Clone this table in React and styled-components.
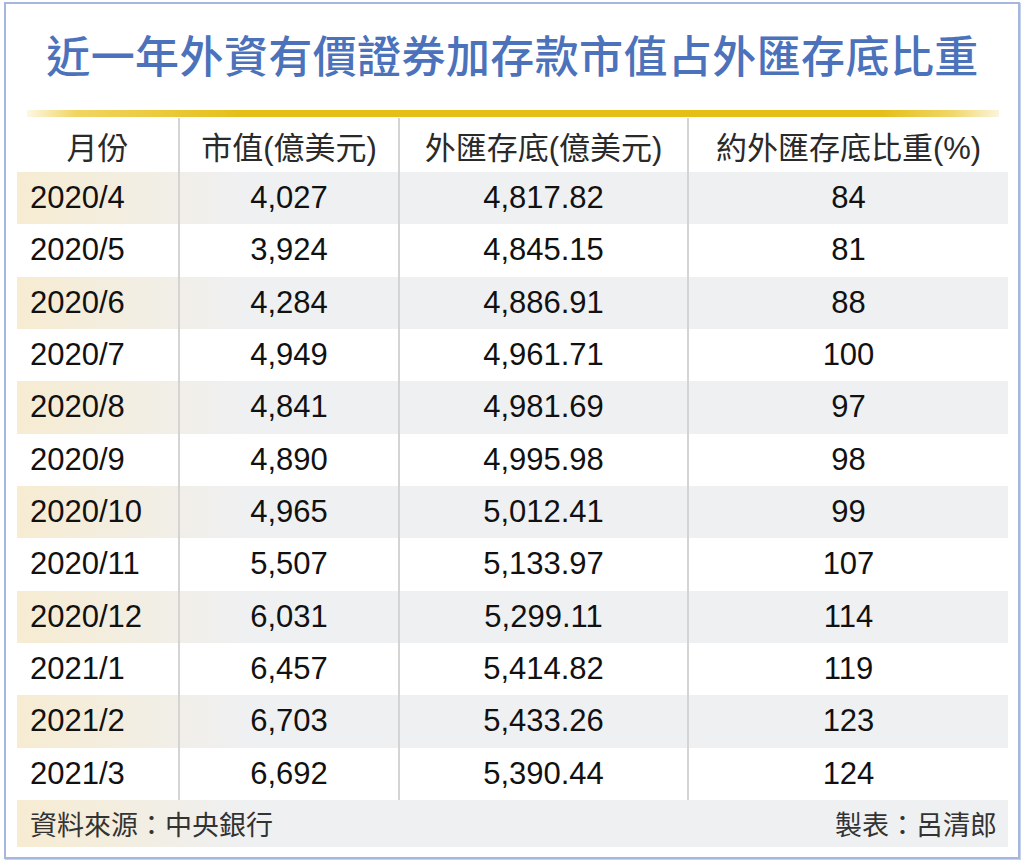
import React from 'react'
import styled, { createGlobalStyle } from 'styled-components'

const GlobalStyle = createGlobalStyle`
	html, body {
		margin: 0;
		padding: 0;
		background: #fff;
	}
	body {
		font-family: "Liberation Sans", "Noto Sans CJK TC", sans-serif;
	}
`

const Frame = styled.div`
	box-sizing: border-box;
	width: 1016px;
	height: 857px;
	margin: 2px 4px;
	border: 2px solid #a5b7de;
	box-shadow: 1px 1px 0 #c6d1ea;
	padding: 0 10px 8px 11px;
	display: flex;
	flex-direction: column;
`

const Title = styled.h1`
	margin: 0;
	height: 106px;
	display: flex;
	align-items: center;
	justify-content: center;
	padding-bottom: 6px;
	box-sizing: border-box;
	font-family: "Noto Sans CJK TC", sans-serif;
	font-weight: 500;
	font-size: 44px;
	letter-spacing: 0.4px;
	color: #4b72bb;
`

const GoldLine = styled.div`
	height: 7px;
	margin: 0 9px 1px 10px;
	background: linear-gradient(
		to right,
		#fdf8e4 0%,
		#f1d561 5%,
		#e5bf18 22%,
		#e5bf18 88%,
		#f0d666 95%,
		#fbf4dc 100%
	);
`

const Grid = styled.div`
	display: grid;
	grid-template-columns: 161px 220px 289px 321px;
`

const Row = styled.div`
	display: contents;
`

const Cell = styled.div`
	display: flex;
	align-items: center;
	justify-content: ${(p) => (p.$left ? 'flex-start' : 'center')};
	padding-left: ${(p) => (p.$left ? '13px' : '0')};
	height: ${(p) => (p.$head ? '54px' : '52.33px')};
	border-left: ${(p) => (p.$first ? 'none' : '2px solid #d4d4d4')};
	font-family: "Liberation Sans", "Noto Sans CJK TC", sans-serif;
	font-size: 31px;
	color: ${(p) => (p.$head ? '#2a2a2a' : '#111')};
	box-sizing: border-box;
`

const Stripe = styled.div`
	grid-column: 1 / -1;
	display: grid;
	grid-template-columns: subgrid;
	background: ${(p) =>
		p.$on
			? 'linear-gradient(to right, #f7ecd2 0px, #f2eee4 130px, #eff0f2 230px, #eff0f2 100%)'
			: '#fff'};
`

const Footer = styled.div`
	height: 47px;
	display: flex;
	align-items: center;
	justify-content: space-between;
	padding: 0 11px 0 13px;
	background: linear-gradient(to right, #f7ecd2 0px, #f2eee4 130px, #eff0f2 230px, #eff0f2 100%);
	font-family: "Noto Sans CJK TC", sans-serif;
	font-size: 27px;
	color: #333;
`

const headers = ['月份', '市值(億美元)', '外匯存底(億美元)', '約外匯存底比重(%)']

const rows = [
	['2020/4', '4,027', '4,817.82', '84'],
	['2020/5', '3,924', '4,845.15', '81'],
	['2020/6', '4,284', '4,886.91', '88'],
	['2020/7', '4,949', '4,961.71', '100'],
	['2020/8', '4,841', '4,981.69', '97'],
	['2020/9', '4,890', '4,995.98', '98'],
	['2020/10', '4,965', '5,012.41', '99'],
	['2020/11', '5,507', '5,133.97', '107'],
	['2020/12', '6,031', '5,299.11', '114'],
	['2021/1', '6,457', '5,414.82', '119'],
	['2021/2', '6,703', '5,433.26', '123'],
	['2021/3', '6,692', '5,390.44', '124'],
]

const App = () => (
	<>
		<GlobalStyle />
		<Frame>
			<Title>近一年外資有價證券加存款市值占外匯存底比重</Title>
			<GoldLine />
			<Grid>
				<Row>
					{headers.map((h, i) => (
						<Cell key={h} $head $first={i === 0}>{h}</Cell>
					))}
				</Row>
				{rows.map((r, ri) => (
					<Stripe key={r[0]} $on={ri % 2 === 0}>
						{r.map((v, i) => (
							<Cell key={i} $first={i === 0} $left={i === 0}>{v}</Cell>
						))}
					</Stripe>
				))}
			</Grid>
			<Footer>
				<span>資料來源：中央銀行</span>
				<span>製表：呂清郎</span>
			</Footer>
		</Frame>
	</>
)

export default App
